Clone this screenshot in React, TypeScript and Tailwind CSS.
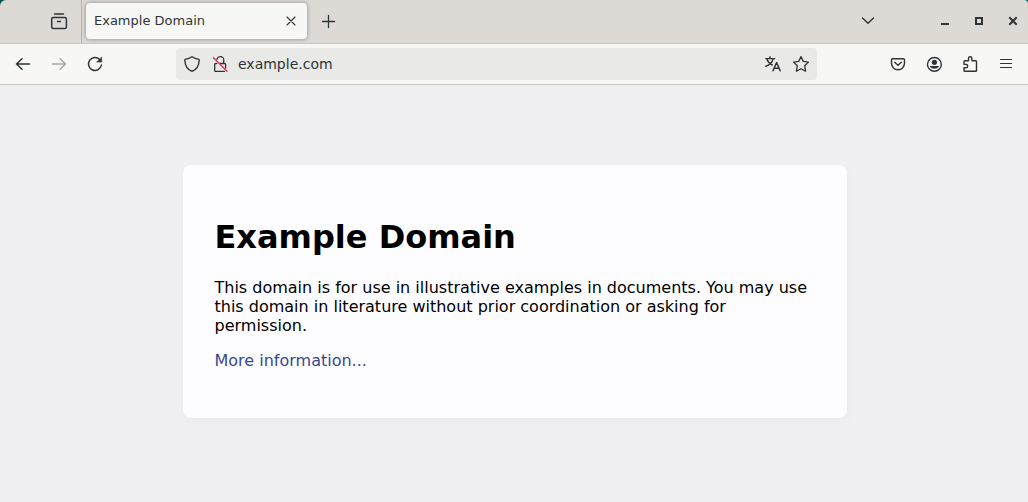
import { useState, type ReactNode } from 'react'

interface IconProps {
  children: ReactNode
}

// All toolbar glyphs share an 18px box and a thin outline
function Icon({ children }: IconProps) {
  return (
    <svg
      viewBox="0 0 18 18"
      className="h-[18px] w-[18px] shrink-0"
      fill="none"
      stroke="currentColor"
      strokeWidth="1.4"
      strokeLinecap="round"
      strokeLinejoin="round"
      aria-hidden="true"
    >
      {children}
    </svg>
  )
}

interface ToolButtonProps {
  label: string
  children: ReactNode
  disabled?: boolean
}

function ToolButton({ label, children, disabled }: ToolButtonProps) {
  return (
    <button
      type="button"
      aria-label={label}
      disabled={disabled}
      className="flex h-8 w-9 items-center justify-center rounded disabled:opacity-40"
    >
      <Icon>{children}</Icon>
    </button>
  )
}

function TabBar() {
  return (
    <div className="flex h-11 items-stretch border-b border-[#cdc7c2] bg-[#dddad6]">
      <div className="flex w-[82px] items-center justify-end border-r border-[#b5b2ae] pr-[13px] pb-px">
        <button type="button" aria-label="Recent browsing">
          <Icon>
            <path d="M4.500 2h9" />
            <rect x="1.700" y="5.400" width="14.700" height="11.100" rx="1.600" strokeWidth="1.500" />
            <path d="M7.500 9.500h3" />
          </Icon>
        </button>
      </div>

      <div className="flex flex-1 items-center pb-px pl-1">
        <div className="flex h-9 w-[221px] items-center justify-between rounded bg-[#f7f7f5] pr-[7px] pl-2 shadow-[0_0_4px_rgba(0,0,0,0.4)]">
          <button type="button" className="text-[13px]">
            Example Domain
          </button>
          <button type="button" aria-label="Close tab">
            <Icon>
              <path d="M5 5l8 8M13 5l-8 8" strokeWidth="1.1" />
            </Icon>
          </button>
        </div>
        <button type="button" aria-label="New tab" className="ml-3">
          <Icon>
            <path d="M9.500 3.500v12M3.500 9.500h12" strokeWidth="1.3" />
          </Icon>
        </button>

        <button type="button" aria-label="List all tabs" className="mr-[59px] ml-auto">
          <Icon>
            <path d="M3.500 6L9 11.300l5.500-5.300" />
          </Icon>
        </button>
        <div className="flex items-center gap-4 pr-[6px]">
          <button type="button" aria-label="Minimize">
            <Icon>
              <path d="M5 11h8v2H5z" fill="currentColor" stroke="none" />
            </Icon>
          </button>
          <button type="button" aria-label="Maximize">
            <Icon>
              <path d="M5 5h8v8H5zM7 7v4h4V7z" fill="currentColor" fillRule="evenodd" stroke="none" />
            </Icon>
          </button>
          <button type="button" aria-label="Close window">
            <Icon>
              <path d="M6 6l6 6M12 6l-6 6" strokeWidth="2" strokeLinecap="square" />
            </Icon>
          </button>
        </div>
      </div>
    </div>
  )
}

function AddressBar() {
  const [url, setUrl] = useState('example.com')

  return (
    <div className="mx-[63px] flex h-8 flex-1 items-center rounded bg-[#e9e9e7] px-[7px]">
      <button type="button" aria-label="Tracking protection">
        <Icon>
          <path d="M9 1.700C7.200 3 4.800 3.900 2.700 4.100C2 4.200 1.800 4.600 1.800 5.200C2 10.500 4.500 14.500 9 16.400C13.500 14.500 16 10.500 16.200 5.200C16.200 4.600 16 4.200 15.300 4.100C13.200 3.900 10.800 3 9 1.700z" />
        </Icon>
      </button>
      <button type="button" aria-label="Connection is not secure" className="ml-[10px]">
        <Icon>
          <path d="M5.800 4.500a3.500 3.500 0 0 1 6.900 1.300v2.700M9.500 8.500h4.100c.600 0 1 .400 1 1v3.500" strokeWidth="1.3" />
          <path d="M5.700 8.500h-1c-.600 0-1 .400-1 1v5.900c0 .600.400 1 1 1h8.800" strokeWidth="1.3" />
          <path d="M2.500 2.700L16 16.200" stroke="#e22850" strokeWidth="1.3" />
        </Icon>
      </button>
      <input
        type="text"
        aria-label="Address"
        value={url}
        onChange={(e) => setUrl(e.target.value)}
        className="ml-[9px] min-w-0 flex-1 bg-transparent text-sm outline-none"
      />
      <button type="button" aria-label="Translate this page">
        <Icon>
          <path d="M1.800 3.600h8.900M6 1.700v1.900M3 4.200c1 3 3.300 4.800 5.300 5.800M9 4.200c-.700 3-3.500 6-7.200 7" />
          <path d="M9 15.800L12.600 7.500l3.600 8.300M10.200 13.200h4.800" strokeWidth="1.5" />
        </Icon>
      </button>
      <button type="button" aria-label="Bookmark this page" className="ml-[10px]">
        <Icon>
          <path
            d="M9 1.600l2.300 4.800 5.200.700-3.800 3.700.900 5.400L9 13.700l-4.600 2.500.900-5.400L1.500 7.100l5.200-.700z"
            strokeWidth="1.3"
          />
        </Icon>
      </button>
    </div>
  )
}

function Toolbar() {
  return (
    <div className="flex items-center border-b border-[#cdc7c2] bg-[#f7f7f5] py-1 pr-1 pl-[5px]">
      <ToolButton label="Back">
        <path d="M2.500 9h13M8 3.700L2.500 9 8 14.300" strokeWidth="1.5" />
      </ToolButton>
      <ToolButton label="Forward" disabled>
        <path d="M2.500 9h13M10 3.700L15.500 9 10 14.300" strokeWidth="1.5" />
      </ToolButton>
      <ToolButton label="Reload">
        <path d="M13.800 4.600A6.500 6.500 0 1 0 15.400 10" />
        <path d="M15.700 2.300v4.800h-4.800z" fill="currentColor" strokeWidth=".6" />
      </ToolButton>

      <AddressBar />

      <ToolButton label="Save to Pocket">
        <path d="M3.700 3.700h10.600a1.200 1.200 0 0 1 1.200 1.200v3.400a6.500 6.500 0 0 1-13 0V4.900a1.200 1.200 0 0 1 1.200-1.200z" />
        <path d="M5.700 7.200L9 10.200l3.300-3" />
      </ToolButton>
      <ToolButton label="Account">
        <circle cx="9.400" cy="9.400" r="6.900" />
        <circle cx="9.400" cy="7.300" r="2.600" fill="currentColor" stroke="none" />
        <path
          d="M5.700 11.100h7.400c.500 0 .800.300.600.800a4.700 3 0 0 1-8.600 0c-.200-.500.100-.800.600-.800z"
          fill="currentColor"
          stroke="none"
        />
      </ToolButton>
      <ToolButton label="Extensions">
        <path d="M3.800 5.700h3.700V3.500a1.700 1.700 0 0 1 3.400 0v2.200h3.800c.500 0 .800.300.800.800v8.900c0 .500-.300.800-.800.800H3.800c-.500 0-.800-.300-.800-.800v-2.600h2a1.700 1.700 0 0 0 0-3.400H3V6.500c0-.500.300-.800.800-.800z" />
      </ToolButton>
      <ToolButton label="Open application menu">
        <path d="M3.500 4.500h11M3.500 8.500h11M3.500 12.500h11" strokeWidth="1.2" />
      </ToolButton>
    </div>
  )
}

export default function App() {
  return (
    <div className="flex min-h-screen flex-col bg-[#0b5558] font-['DejaVu_Sans',sans-serif]">
      <header className="overflow-hidden rounded-tl-md rounded-tr text-[#2e3436]">
        <TabBar />
        <Toolbar />
      </header>

      {/* Page */}
      <main className="flex-1 bg-[#f0f0f2] py-20 pr-4 pl-[17px]">
        <article className="mx-auto max-w-[664px] rounded-lg bg-[#fdfdff] p-8 text-base leading-[19px] text-black shadow-[2px_3px_7px_2px_rgba(0,0,0,0.02)]">
          <h1 className="mt-[21px] mb-[22px] text-[32px] leading-[38px] font-bold">Example Domain</h1>
          <p className="my-4">
            This domain is for use in illustrative examples in documents. You may use this domain in
            literature without prior coordination or asking for permission.
          </p>
          <p className="my-4">
            <a href="https://www.iana.org/domains/example" className="text-[#38488f]">
              More information...
            </a>
          </p>
        </article>
      </main>
    </div>
  )
}
